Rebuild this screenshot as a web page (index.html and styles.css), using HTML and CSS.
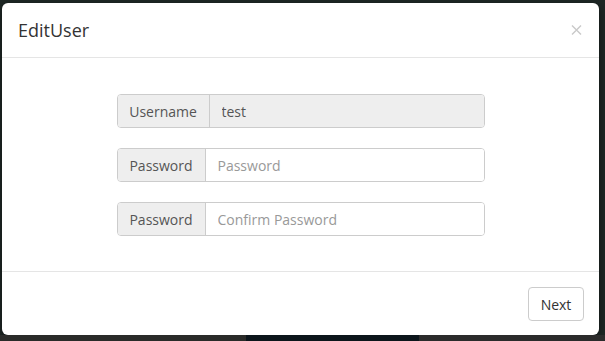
FILE: index.html
```html
<!DOCTYPE html>
<html lang="en">
<head>
  <meta charset="UTF-8">
  <meta name="viewport" content="width=device-width, initial-scale=1.0">
  <title>Edit User</title>
  <link rel="stylesheet" href="styles.css">
</head>
<body>
  <div class="stage">
    <div class="modal">
      <div class="modal-header">
        <h4 class="modal-title">EditUser</h4>
        <button type="button" class="close" aria-label="Close">
          <svg width="11" height="10" viewBox="0 0 11 10">
            <path d="M1 0.5 L10 9.5 M10 0.5 L1 9.5" stroke="#c9c9c9" stroke-width="1.4" fill="none"/>
          </svg>
        </button>
      </div>

      <div class="modal-body">
        <form class="user-form">
          <div class="input-group disabled">
            <span class="addon addon-wide">Username</span>
            <input type="text" value="test" disabled>
          </div>
          <div class="input-group">
            <span class="addon">Password</span>
            <input type="password" placeholder="Password">
          </div>
          <div class="input-group">
            <span class="addon">Password</span>
            <input type="password" placeholder="Confirm Password">
          </div>
        </form>
      </div>

      <div class="modal-footer">
        <button type="button" class="btn">Next</button>
      </div>
    </div>
  </div>

  <div class="backdrop-strip">
    <span class="strip-left"></span>
    <span class="strip-mid"></span>
    <span class="strip-right"></span>
  </div>
</body>
</html>
```

FILE: styles.css
```css
body {
  margin: 0;
  padding: 0;
  font-family: 'Open Sans', 'Noto Sans', sans-serif;
  background-color: #1e2725;
  color: #333;
  height: 341px;
  overflow: hidden;
}

.stage {
  padding: 3px 6px 0 2px;
  background-color: #1e2725;
}

.modal {
  height: 332px;
  background-color: #fff;
  border-radius: 6px;
  display: flex;
  flex-direction: column;
  box-shadow: 0 3px 9px rgba(0, 0, 0, 0.5);
}

.modal-header {
  height: 54px;
  border-bottom: 1px solid #e5e5e5;
  display: flex;
  align-items: center;
  justify-content: space-between;
  padding: 0 17px 0 16px;
}

.modal-title {
  margin: 0;
  font-size: 18px;
  font-weight: 400;
  color: #333;
}

.close {
  border: 0;
  background: none;
  padding: 0;
  display: flex;
  cursor: pointer;
}

.modal-body {
  flex: 1;
  padding-top: 36px;
}

.user-form {
  width: 368px;
  margin: 0 auto;
}

.input-group {
  display: flex;
  height: 34px;
  margin-bottom: 20px;
  border: 1px solid #ccc;
  border-radius: 4px;
  box-sizing: border-box;
  overflow: hidden;
}

.addon {
  width: 88px;
  flex: none;
  box-sizing: border-box;
  display: flex;
  align-items: center;
  justify-content: center;
  background-color: #eee;
  border-right: 1px solid #ccc;
  font-size: 14px;
  color: #555;
}

.addon-wide {
  width: 92px;
}

.input-group input {
  flex: 1;
  border: 0;
  outline: none;
  padding: 0 12px;
  font-family: inherit;
  font-size: 14px;
  color: #555;
  background-color: #fff;
}

.input-group input::placeholder {
  color: #999;
}

.input-group.disabled input {
  background-color: #eee;
  color: #555;
  -webkit-text-fill-color: #555;
}

.modal-footer {
  height: 64px;
  border-top: 1px solid #e5e5e5;
  display: flex;
  justify-content: flex-end;
  align-items: flex-start;
  padding: 15px 15px 0 0;
  box-sizing: border-box;
}

.btn {
  height: 34px;
  width: 56px;
  padding: 0;
  font-family: inherit;
  font-size: 14px;
  color: #333;
  background-color: #fff;
  border: 1px solid #ccc;
  border-radius: 4px;
}

.backdrop-strip {
  display: flex;
  height: 6px;
}

.strip-left {
  width: 246px;
  background-color: #2a2b29;
}

.strip-mid {
  width: 173px;
  background-color: #0c151b;
}

.strip-right {
  flex: 1;
  background-color: #2b2b2b;
}
```
